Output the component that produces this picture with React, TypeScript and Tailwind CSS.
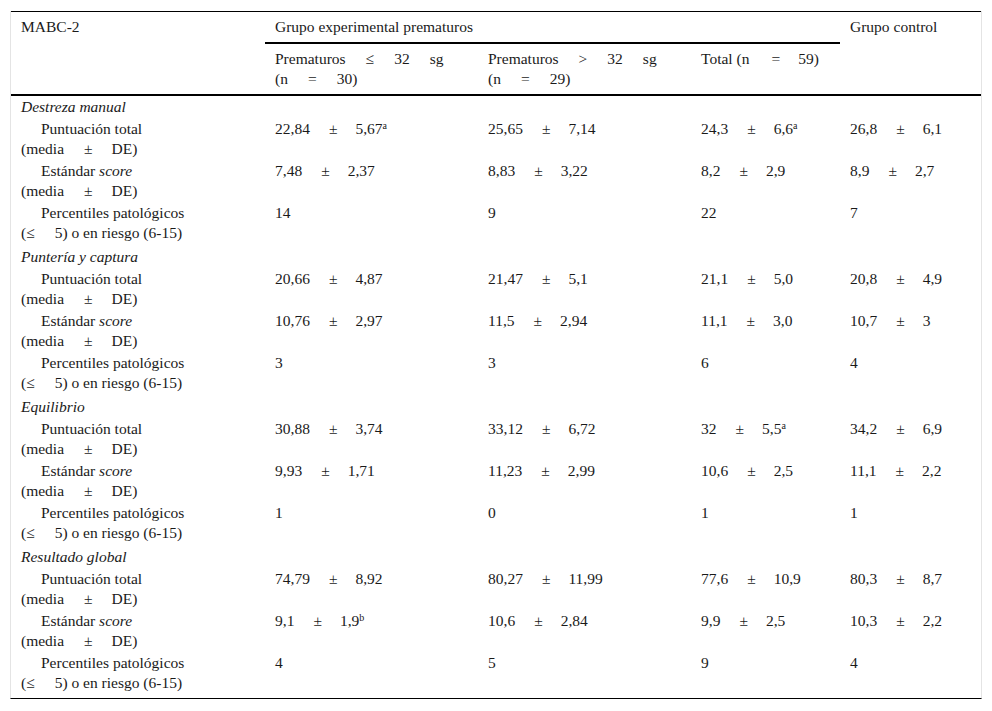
import React from "react";

type Cell = { a: string; b?: string; sup?: string };

const PM = ({ a, b, sup }: Cell) =>
  b === undefined ? (
    <>{a}</>
  ) : (
    <>
      {a}
      <span className="ml-[19px] mr-[18px]">±</span>
      {b}
      {sup ? <sup className="text-[10px]">{sup}</sup> : null}
    </>
  );

type Sec = { title: string; rows: Cell[][] };

const c = (a: string, b?: string, sup?: string): Cell => ({ a, b, sup });

const sections: Sec[] = [
  {
    title: "Destreza manual",
    rows: [
      [c("22,84", "5,67", "a"), c("25,65", "7,14"), c("24,3", "6,6", "a"), c("26,8", "6,1")],
      [c("7,48", "2,37"), c("8,83", "3,22"), c("8,2", "2,9"), c("8,9", "2,7")],
      [c("14"), c("9"), c("22"), c("7")],
    ],
  },
  {
    title: "Puntería y captura",
    rows: [
      [c("20,66", "4,87"), c("21,47", "5,1"), c("21,1", "5,0"), c("20,8", "4,9")],
      [c("10,76", "2,97"), c("11,5", "2,94"), c("11,1", "3,0"), c("10,7", "3")],
      [c("3"), c("3"), c("6"), c("4")],
    ],
  },
  {
    title: "Equilibrio",
    rows: [
      [c("30,88", "3,74"), c("33,12", "6,72"), c("32", "5,5", "a"), c("34,2", "6,9")],
      [c("9,93", "1,71"), c("11,23", "2,99"), c("10,6", "2,5"), c("11,1", "2,2")],
      [c("1"), c("0"), c("1"), c("1")],
    ],
  },
  {
    title: "Resultado global",
    rows: [
      [c("74,79", "8,92"), c("80,27", "11,99"), c("77,6", "10,9"), c("80,3", "8,7")],
      [c("9,1", "1,9", "b"), c("10,6", "2,84"), c("9,9", "2,5"), c("10,3", "2,2")],
      [c("4"), c("5"), c("9"), c("4")],
    ],
  },
];

const Media = () => (
  <>
    (media<span className="ml-[20px] mr-[19px]">±</span>DE)
  </>
);

const Label = ({ i }: { i: number }) => {
  if (i === 0)
    return (
      <>
        Puntuación total
        <br />
        <Media />
      </>
    );
  if (i === 1)
    return (
      <>
        Estándar <i>score</i>
        <br />
        <Media />
      </>
    );
  return (
    <>
      Percentiles patológicos
      <br />
      (≤<span className="ml-[20px]" />5) o en riesgo (6-15)
    </>
  );
};

export default function App() {
  return (
    <div className="min-h-[711px] bg-white pt-[11px] pl-[10px] font-[Liberation_Serif,Times_New_Roman,serif] text-[15.5px] leading-[20px] text-[#1a1a1a]">
      <div className="w-[972px] border-l border-r border-[#e4e4e4] pb-[2px] border-b border-b-black">
        <table className="w-full table-fixed border-collapse">
          <colgroup>
            <col className="w-[254px]" />
            <col className="w-[213px]" />
            <col className="w-[213px]" />
            <col className="w-[149px]" />
            <col />
          </colgroup>
          <thead>
            <tr className="border-t border-black">
              <th rowSpan={2} className="pl-[10px] pt-[5px] text-left align-top font-normal">
                MABC-2
              </th>
              <th colSpan={3} className="border-b-2 border-black pl-[10px] pt-[5px] pb-[5px] text-left align-top font-normal">
                Grupo experimental prematuros
              </th>
              <th rowSpan={2} className="pl-[10px] pt-[5px] text-left align-top font-normal">
                Grupo control
              </th>
            </tr>
            <tr className="border-b-2 border-black">
              <th className="pl-[10px] pt-[5px] pb-[5px] text-left align-top font-normal whitespace-nowrap">
                Prematuros<span className="ml-[20px] mr-[20px]">≤</span>32<span className="ml-[20px]">sg</span>
                <br />
                (n<span className="ml-[20px] mr-[20px]">=</span>30)
              </th>
              <th className="pl-[10px] pt-[5px] pb-[5px] text-left align-top font-normal whitespace-nowrap">
                Prematuros<span className="ml-[20px] mr-[20px]">&gt;</span>32<span className="ml-[20px]">sg</span>
                <br />
                (n<span className="ml-[20px] mr-[20px]">=</span>29)
              </th>
              <th className="pl-[10px] pt-[5px] pb-[5px] text-left align-top font-normal whitespace-nowrap">
                Total (n<span className="ml-[22px] mr-[18px]">=</span>59)
              </th>
            </tr>
          </thead>
          <tbody>
            {sections.map((s) => (
              <React.Fragment key={s.title}>
                <tr>
                  <td colSpan={5} className="pl-[10px] py-[1px] italic">
                    {s.title}
                  </td>
                </tr>
                {s.rows.map((r, i) => (
                  <tr key={i}>
                    <td className={`pl-[10px] pt-[1px] align-top indent-[20px] whitespace-nowrap ${i === 2 ? "pb-[3px]" : "pb-[1px]"}`}>
                      <Label i={i} />
                    </td>
                    {r.map((cell, j) => (
                      <td key={j} className="pl-[10px] pt-[1px] align-top whitespace-nowrap">
                        <PM {...cell} />
                      </td>
                    ))}
                  </tr>
                ))}
              </React.Fragment>
            ))}
          </tbody>
        </table>
      </div>
    </div>
  );
}
